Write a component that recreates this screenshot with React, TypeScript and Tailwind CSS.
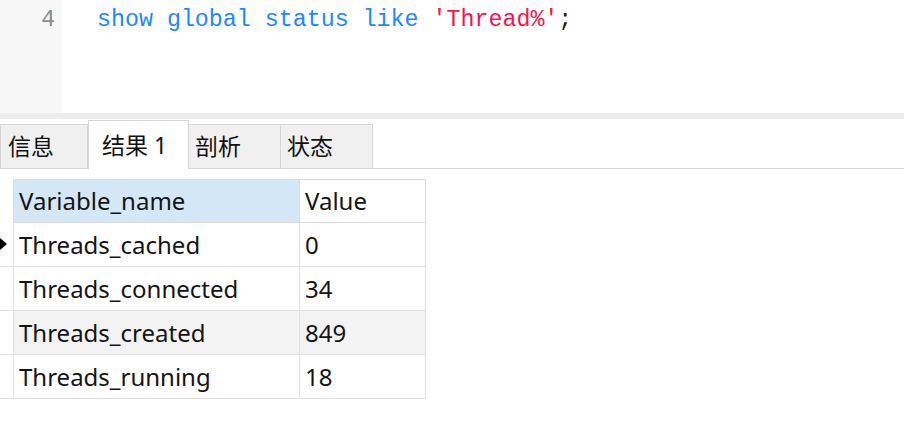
import React from 'react';

const rows = [
  { name: 'Threads_cached', value: '0', bg: 'bg-white', current: true },
  { name: 'Threads_connected', value: '34', bg: 'bg-white', current: false },
  { name: 'Threads_created', value: '849', bg: 'bg-[#f3f3f3]', current: false },
  { name: 'Threads_running', value: '18', bg: 'bg-white', current: false },
];

const tabs = [
  { label: '信息', w: 'w-[88px]', active: false },
  { label: '结果 1', w: 'w-[101px]', active: true },
  { label: '剖析', w: 'w-[93px]', active: false },
  { label: '状态', w: 'w-[93px]', active: false },
];

const uiFont = "font-['Noto_Sans','Noto_Sans_CJK_SC',sans-serif]";

export default function App() {
  return (
    <div className={`w-[904px] h-[424px] overflow-hidden bg-white text-[#111] ${uiFont}`}>
      {/* editor */}
      <div className="flex h-[113px]">
        <div className="w-[62px] bg-[#f7f7f7] flex justify-end pr-[7px] pt-[3px]">
          <span className="font-['Liberation_Mono',monospace] text-[23px] leading-[34px] text-[#8a8a8a]">4</span>
        </div>
        <div className="flex-1 pl-[35px] pt-[3px]">
          <pre className="font-['Liberation_Mono',monospace] text-[23.3px] leading-[34px] text-[#1e88ff]">
            show global status like <span className="text-[#f5144f]">'Thread%'</span><span className="text-[#222]">;</span>
          </pre>
        </div>
      </div>
      <div className="h-[6px] bg-[#ececec]" />

      {/* tabs */}
      <div className="flex items-end h-[50px] border-b border-[#d6d6d6] pt-[2px]">
        {tabs.map((t) =>
          t.active ? (
            <div
              key={t.label}
              className={`${t.w} h-[49px] -mb-px bg-white border border-b-0 border-[#d6d6d6] flex items-center pl-[13px] text-[23px]`}
            >
              {t.label}
            </div>
          ) : (
            <div
              key={t.label}
              className={`${t.w} h-[44px] -ml-px first:ml-0 bg-[#f0f0f0] border border-b-0 border-[#d6d6d6] flex items-center pl-[6px] text-[23px] first:pl-[7px]`}
            >
              {t.label}
            </div>
          )
        )}
      </div>

      {/* grid */}
      <div className="pt-[10px] text-[24px] text-[#141414]">
        <div className="flex h-[44px]">
          <div className="w-[13px]" />
          <div className="w-[286px] bg-[#d4e7f6] border-t border-b border-l border-[#dcdcdc] flex items-center pl-[5px]">
            Variable_name
          </div>
          <div className="w-[127px] bg-white border-t border-b border-l border-r border-[#dcdcdc] flex items-center pl-[5px]">
            Value
          </div>
        </div>
        {rows.map((r) => (
          <div key={r.name} className="flex h-[44px]">
            <div className="w-[13px] bg-white border-b border-[#e2e2e2] flex items-center">
              {r.current && (
                <svg width="8" height="12" viewBox="0 0 8 12" className="-mt-[2px]">
                  <path d="M0 0 L7 6 L0 12 Z" fill="#000" />
                </svg>
              )}
            </div>
            <div className={`w-[286px] ${r.bg} border-b border-l border-[#e2e2e2] flex items-center pl-[5px]`}>
              {r.name}
            </div>
            <div className={`w-[127px] ${r.bg} border-b border-l border-r border-[#e2e2e2] flex items-center pl-[5px]`}>
              {r.value}
            </div>
          </div>
        ))}
      </div>
    </div>
  );
}
